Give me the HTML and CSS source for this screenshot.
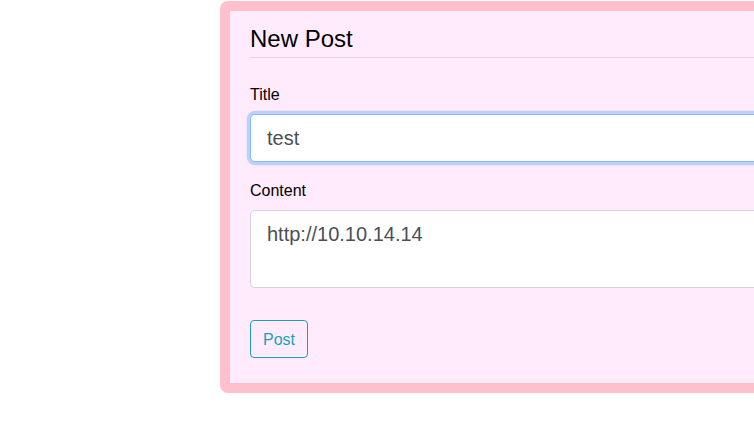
FILE: index.html
```html
<!DOCTYPE html>
<html>
<head>
<meta charset="utf-8">
<link rel="stylesheet" href="styles.css">
</head>
<body>
<div class="page">
  <div class="card">
    <h3 class="card-title">New Post</h3>
    <hr class="divider">
    <form class="post-form">
      <div class="form-group">
        <label class="form-label">Title</label>
        <input class="form-control focused" type="text" value="test">
      </div>
      <div class="form-group group-last">
        <label class="form-label">Content</label>
        <textarea class="form-control textarea" rows="2">http://10.10.14.14</textarea>
      </div>
      <button class="btn-outline" type="button">Post</button>
    </form>
  </div>
</div>
</body>
</html>
```

FILE: styles.css
```css
html, body {
  margin: 0;
  padding: 0;
  overflow: hidden;
  background: #ffffff;
  font-family: "Liberation Sans", Arial, sans-serif;
  color: #212529;
}

.page {
  padding: 1px 0 0 220px;
  width: 900px;
}

.card {
  width: 640px;
  border: 10px solid #ffc0cb;
  border-radius: 8px;
  background: #ffebfc;
  padding: 14px 20px 25px 20px;
}

.card-title {
  margin: 0 0 3px 0;
  font-size: 24px;
  font-weight: 400;
  line-height: 1.2;
  color: #000;
}

.divider {
  margin: 0 0 24px 0;
  border: 0;
  border-top: 1px solid rgba(0, 0, 0, 0.1);
}

.post-form {
  margin: 0;
}

.form-group {
  margin-bottom: 16px;
  display: flex;
  flex-direction: column;
}

.group-last {
  margin-bottom: 32px;
}

.form-label {
  display: block;
  font-size: 16px;
  line-height: 24px;
  padding-top: 1px;
  margin-bottom: 7px;
  color: #000;
}

.form-control {
  box-sizing: border-box;
  display: block;
  width: 100%;
  height: 48px;
  padding: 9px 16px 7px 16px;
  font-family: "Liberation Sans", Arial, sans-serif;
  font-size: 20px;
  line-height: 1.5;
  color: #495057;
  background: #fff;
  border: 1px solid #ced4da;
  border-radius: 4.8px;
  outline: none;
  margin: 0;
}

.focused {
  border-color: #80bdff;
  box-shadow: 0 0 0 3.2px rgba(0, 123, 255, 0.25);
}

.textarea {
  height: 78px;
  padding-top: 8px;
  padding-bottom: 8px;
  resize: none;
  overflow: hidden;
}

.btn-outline {
  display: block;
  box-sizing: border-box;
  height: 38px;
  padding: 7px 12px 5px 12px;
  font-family: "Liberation Sans", Arial, sans-serif;
  font-size: 16px;
  line-height: 24px;
  color: #17a2b8;
  background: transparent;
  border: 1px solid #17a2b8;
  border-radius: 4px;
  cursor: pointer;
}
```
